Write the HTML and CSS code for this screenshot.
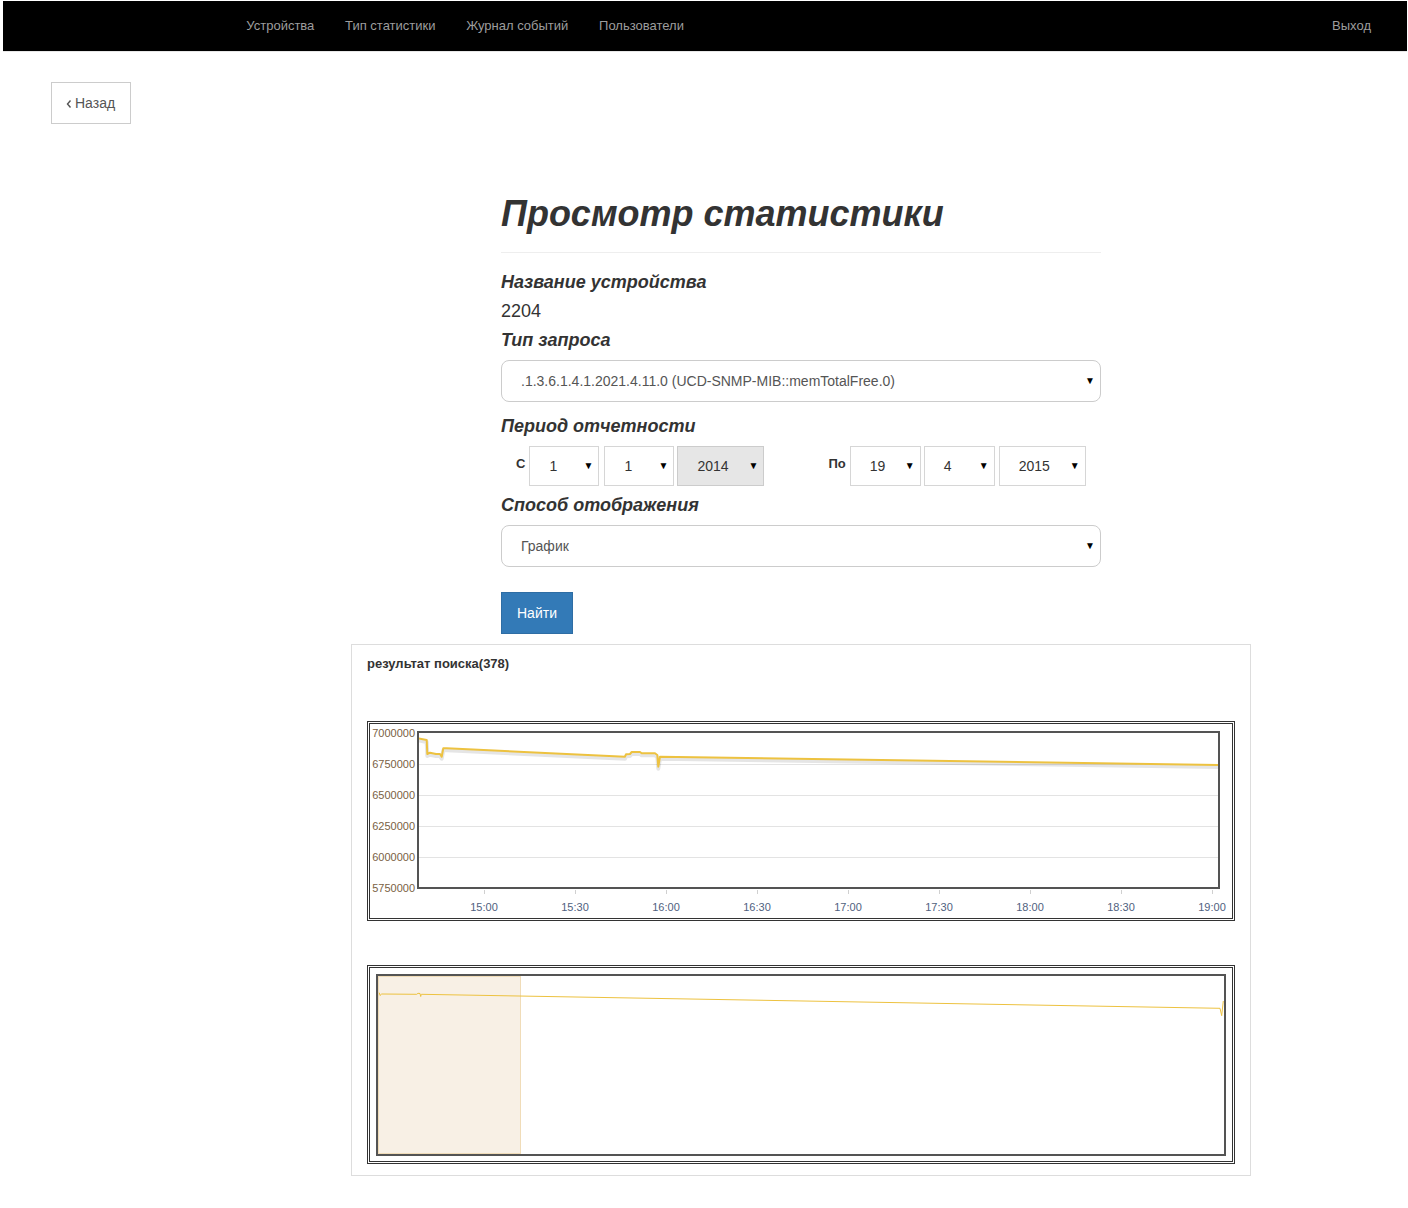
FILE: index.html
```html
<!DOCTYPE html>
<html lang="ru">
<head>
<meta charset="utf-8">
<title>Просмотр статистики</title>
<link rel="stylesheet" href="styles.css">
</head>
<body>
<nav class="navbar">
  <ul class="nav nav-left">
    <li><a href="#">Устройства</a></li>
    <li><a href="#">Тип статистики</a></li>
    <li><a href="#">Журнал событий</a></li>
    <li><a href="#">Пользователи</a></li>
  </ul>
  <ul class="nav nav-right">
    <li><a href="#">Выход</a></li>
  </ul>
</nav>
<main class="page">
  <a href="#" class="btn-back"><svg class="chev" width="6" height="10" viewBox="0 0 6 10"><polyline points="4.5,1.5 1.5,5 4.5,8.5" fill="none" stroke="#555" stroke-width="1.4"/></svg>Назад</a>

  <section class="form-col">
    <header class="page-header"><h1 class="page-title">Просмотр статистики</h1></header>
    <h4 class="label l-first">Название устройства</h4>
    <p class="value">2204</p>
    <h4 class="label l-type">Тип запроса</h4>
    <div class="select select-wide"><span>.1.3.6.1.4.1.2021.4.11.0 (UCD-SNMP-MIB::memTotalFree.0)</span><span class="caret">▼</span></div>
    <h4 class="label l-period">Период отчетности</h4>
    <div class="period">
      <span class="period-label">С</span>
      <div class="select sel-sm f1"><span>1</span><span class="caret">▼</span></div>
      <div class="select sel-sm f2"><span>1</span><span class="caret">▼</span></div>
      <div class="select sel-yr f3 active"><span>2014</span><span class="caret">▼</span></div>
      <span class="period-label to">По</span>
      <div class="select sel-sm t1"><span>19</span><span class="caret">▼</span></div>
      <div class="select sel-sm t2"><span>4</span><span class="caret">▼</span></div>
      <div class="select sel-yr t3"><span>2015</span><span class="caret">▼</span></div>
    </div>
    <h4 class="label l-mode">Способ отображения</h4>
    <div class="select select-wide"><span>График</span><span class="caret">▼</span></div>
    <button class="btn-primary" type="button">Найти</button>
  </section>

  <section class="panel">
    <div class="panel-title">результат поиска(378)</div>
    <div class="chart chart-main">
      <svg width="862" height="194" viewBox="0 0 862 194">
        <defs><clipPath id="pc"><rect x="49" y="9" width="799" height="154"/></clipPath></defs>
        <g stroke="#e3e3e3" stroke-width="1">
          <line x1="49" y1="40.5" x2="849" y2="40.5"/>
          <line x1="49" y1="71.5" x2="849" y2="71.5"/>
          <line x1="49" y1="102.5" x2="849" y2="102.5"/>
          <line x1="49" y1="133.5" x2="849" y2="133.5"/>
        </g>
        <g stroke="#d0d0d0" stroke-width="1">
          <line x1="114.5" y1="166" x2="114.5" y2="170"/>
          <line x1="205.5" y1="166" x2="205.5" y2="170"/>
          <line x1="296.5" y1="166" x2="296.5" y2="170"/>
          <line x1="387.5" y1="166" x2="387.5" y2="170"/>
          <line x1="478.5" y1="166" x2="478.5" y2="170"/>
          <line x1="569.5" y1="166" x2="569.5" y2="170"/>
          <line x1="660.5" y1="166" x2="660.5" y2="170"/>
          <line x1="751.5" y1="166" x2="751.5" y2="170"/>
          <line x1="842.5" y1="166" x2="842.5" y2="170"/>
        </g>
        <g clip-path="url(#pc)" fill="none" stroke-linejoin="round">
          <path transform="translate(0,2)" stroke="rgba(0,0,0,0.1)" stroke-width="4" d="M48.3,14.3 L56.7,16 L57.3,30 L60,28.7 L66,30 L70,30 L71.7,32.7 L73.3,24.3 L76.7,24.3 L255,32.7 L256,30.3 L260,30 L261.7,28 L270,28 L271.7,29.3 L285,29.3 L287.3,31 L288.3,42.7 L290,32.7 L848,41"/>
          <path stroke="#edc240" stroke-width="2" d="M48.3,14.3 L56.7,16 L57.3,30 L60,28.7 L66,30 L70,30 L71.7,32.7 L73.3,24.3 L76.7,24.3 L255,32.7 L256,30.3 L260,30 L261.7,28 L270,28 L271.7,29.3 L285,29.3 L287.3,31 L288.3,42.7 L290,32.7 L848,41"/>
        </g>
        <rect x="48" y="8" width="801" height="156" fill="none" stroke="#545454" stroke-width="2"/>
        <g class="ylab" text-anchor="end">
          <text x="45" y="13">7000000</text>
          <text x="45" y="44">6750000</text>
          <text x="45" y="75">6500000</text>
          <text x="45" y="106">6250000</text>
          <text x="45" y="137">6000000</text>
          <text x="45" y="168">5750000</text>
        </g>
        <g class="xlab" text-anchor="middle">
          <text x="114" y="187">15:00</text>
          <text x="205" y="187">15:30</text>
          <text x="296" y="187">16:00</text>
          <text x="387" y="187">16:30</text>
          <text x="478" y="187">17:00</text>
          <text x="569" y="187">17:30</text>
          <text x="660" y="187">18:00</text>
          <text x="751" y="187">18:30</text>
          <text x="842" y="187">19:00</text>
        </g>
      </svg>
    </div>
    <div class="chart chart-overview">
      <svg width="862" height="193" viewBox="0 0 862 193">
        <rect x="8.5" y="8.5" width="142" height="177" fill="#f8f0e5" stroke="#f0dcb8" stroke-width="1"/>
        <path fill="none" stroke="#edc240" stroke-width="1" d="M9.3,24.7 L10,27.5 L11.7,26 L46.7,26.3 L48,25.3 L50,25.5 L50.7,28.5 L51.3,26.3 L850,40.3 L851.7,47.7 L853.3,33"/>
        <rect x="7" y="7" width="848" height="180" fill="none" stroke="#545454" stroke-width="2"/>
      </svg>
    </div>
  </section>
</main>
</body>
</html>
```

FILE: styles.css
```css
* { box-sizing: border-box; }

body {
  margin: 1px 1px 0 3px;
  font-family: "Liberation Sans", Arial, Helvetica, sans-serif;
  font-size: 14px;
  line-height: 20px;
  color: #333;
  background: #fff;
}

a { text-decoration: none; }

.navbar {
  display: flex;
  justify-content: space-between;
  height: 51px;
  background: #000;
  border-bottom: 1px solid #e7e7e7;
  padding: 0 21px 0 228px;
}

.nav {
  display: flex;
  list-style: none;
  margin: 0;
  padding: 0;
}

.nav a {
  display: block;
  padding: 15px 15.35px;
  font-size: 13px;
  line-height: 20px;
  color: #9d9d9d;
}

.nav-right a {
  padding: 15px;
}

.page {
  padding-top: 30px;
}

.btn-back {
  display: inline-flex;
  align-items: center;
  margin-left: 48px;
  height: 42px;
  padding: 0 15px 0 14px;
  border: 1px solid #ccc;
  color: #555;
  font-size: 14px;
  line-height: 20px;
}

.chev {
  margin-right: 3px;
  margin-top: 1px;
}

.form-col {
  width: 600px;
  margin-left: 498px;
}

.page-header {
  margin-top: 70px;
  padding-bottom: 18px;
  border-bottom: 1px solid #eee;
}

.page-title {
  margin: 0;
  font-size: 36px;
  line-height: 40px;
  font-weight: bold;
  font-style: italic;
  color: #333;
}

.label {
  margin: 0;
  font-size: 18px;
  line-height: 20px;
  font-weight: bold;
  font-style: italic;
  color: #333;
}

.l-first { margin-top: 19px; }
.l-type { margin-top: 9px; }
.l-period { margin-top: 14px; }
.l-mode { margin-top: 9px; }

.value {
  margin: 9px 0 0;
  font-size: 18px;
  line-height: 20px;
}

.select {
  display: flex;
  align-items: center;
  justify-content: space-between;
  background: #fff;
  border: 1px solid #ccc;
  color: #555;
  font-size: 14px;
}

.select-wide {
  height: 42px;
  margin-top: 10px;
  padding: 0 5px 0 19px;
  border-radius: 8px;
}

.caret {
  font-size: 10px;
  color: #000;
  line-height: 10px;
}

.period {
  display: flex;
  align-items: center;
  margin-top: 10px;
  padding-left: 15px;
  height: 40px;
}

.period-label {
  font-size: 13px;
  font-weight: bold;
  color: #333;
  margin-right: 4px;
  margin-top: -4px;
}

.period-label.to {
  margin-left: 64px;
}

.sel-sm, .sel-yr {
  height: 40px;
  padding: 0 5px 0 19px;
  color: #333;
  border-color: #d6d6d6;
}

.f1 { width: 70px; }
.f2 { width: 70px; margin-left: 5px; }
.f3 { width: 87px; margin-left: 3px; }
.t1 { width: 71px; }
.t2 { width: 71px; margin-left: 3px; }
.t3 { width: 87px; margin-left: 4px; }

.active {
  background: #e6e6e6;
  border-color: #ccc;
}

.btn-primary {
  display: block;
  margin-top: 25px;
  height: 42px;
  padding: 0 15px;
  background: #337ab7;
  border: 1px solid #2e6da4;
  border-radius: 0;
  color: #fff;
  font-family: inherit;
  font-size: 14px;
  line-height: 20px;
}

.panel {
  width: 900px;
  margin: 10px 0 0 348px;
  padding: 10px 15px 11px;
  border: 1px solid #ddd;
}

.panel-title {
  font-size: 13px;
  font-weight: bold;
  line-height: 18px;
  color: #333;
}

.chart {
  border: 3px double #333;
}

.chart svg { display: block; }

.chart-main { margin-top: 48px; }
.chart-overview { margin-top: 44px; }

.ylab text {
  font-family: "Liberation Sans", Arial, sans-serif;
  font-size: 11px;
  fill: #7a5f44;
}

.xlab text {
  font-family: "Liberation Sans", Arial, sans-serif;
  font-size: 11px;
  fill: #4f6180;
}
```
